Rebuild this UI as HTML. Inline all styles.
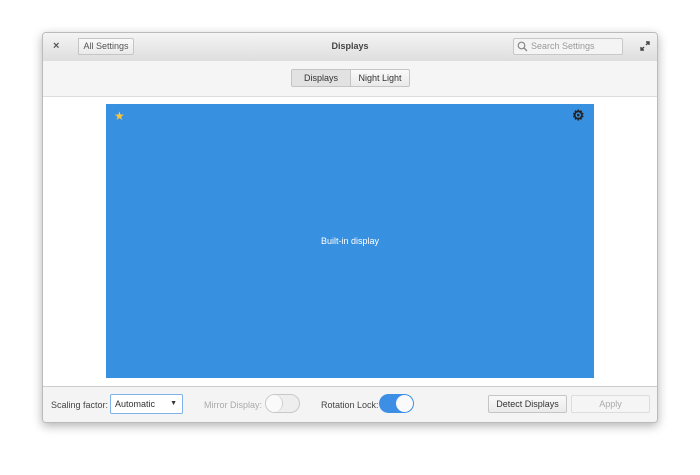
<!DOCTYPE html><html><head><style>
body{margin:0;width:700px;height:475px;background:#fff;font-family:"Liberation Sans",sans-serif;font-size:9px;color:#333;position:relative;overflow:hidden}
.win{position:absolute;left:42px;top:32px;width:616px;height:391px;border:1px solid #bbb;border-radius:4px;box-shadow:0 3px 10px rgba(0,0,0,.3);background:#fff;overflow:hidden;box-sizing:border-box}
.hdr{position:absolute;left:0;top:0;width:100%;height:28px;background:linear-gradient(#f4f4f4,#dedede);border-bottom:1px solid #bfbfbf}
.tb{position:absolute;left:0;top:28px;width:100%;height:35px;background:#f5f5f5;border-bottom:1px solid #ddd}
.bot{position:absolute;left:0;top:353px;width:100%;height:37px;background:#f4f4f4;border-top:1px solid #ccc}
.a{position:absolute}
.btn{position:absolute;border:1px solid #c5c5c5;border-radius:2px;background:linear-gradient(#fafafa,#eaeaea);text-align:center;box-sizing:border-box}
</style></head><body>
<div class="win">
<div class="hdr">
<div class="a" style="left:10px;top:7px;font-size:11px;font-weight:bold;color:#555">×</div>
<div class="btn" style="left:35px;top:5px;width:56px;height:17px;line-height:15px;color:#555;border-radius:0 2px 2px 0">All Settings</div>
<div class="a" style="left:0;width:100%;top:8px;text-align:center;font-weight:bold;color:#444">Displays</div>
<div class="a" style="left:470px;top:5px;width:110px;height:17px;border:1px solid #c8c8c8;border-radius:2px;background:#f4f4f4;box-sizing:border-box;color:#999;line-height:15px;padding-left:17px">Search Settings</div>
<svg class="a" style="left:474px;top:8px" width="11" height="11"><circle cx="4.5" cy="4.5" r="3.3" fill="none" stroke="#888" stroke-width="1.2"/><line x1="7" y1="7" x2="10" y2="10" stroke="#888" stroke-width="1.3"/></svg>
<svg class="a" style="left:597px;top:8px" width="10" height="10"><path d="M6 1H9V4M9 1L6 4M1 6V9H4M1 9L4 6" fill="none" stroke="#444" stroke-width="1.4"/></svg>
</div>
<div class="tb">
<div class="btn" style="left:248px;top:8px;width:60px;height:18px;line-height:16px;background:#e2e2e2;border-radius:2px 0 0 2px">Displays</div>
<div class="btn" style="left:307px;top:8px;width:60px;height:18px;line-height:16px;border-radius:0 2px 2px 0">Night Light</div>
</div>
<div class="a" style="left:63px;top:71px;width:488px;height:274px;background:#3790e0">
<div class="a" style="left:0;width:100%;top:132px;text-align:center;color:#fff">Built-in display</div>
<div class="a" style="left:8px;top:5px;color:#f9c440;font-size:12px">★</div>
<div class="a" style="left:466px;top:3px;color:#222;font-size:14px;font-weight:bold">⚙</div>
</div>
<div class="bot">
<div class="a" style="left:8px;top:13px;color:#444">Scaling factor:</div>
<div class="a" style="left:67px;top:7px;width:73px;height:20px;border:1px solid #7fb2e6;border-radius:2px;box-sizing:border-box;background:#fff;line-height:18px;padding-left:4px;color:#333">Automatic<span style="position:absolute;right:5px;font-size:7px">▼</span></div>
<div class="a" style="left:161px;top:13px;color:#aaa">Mirror Display:</div>
<div class="a" style="left:222px;top:7px;width:35px;height:19px;border:1px solid #c8c8c8;border-radius:10px;background:#eee;box-sizing:border-box"><div class="a" style="left:0;top:0;width:17px;height:17px;border-radius:50%;background:#fafafa;border-right:1px solid #ccc;box-sizing:border-box"></div></div>
<div class="a" style="left:278px;top:13px;color:#444">Rotation Lock:</div>
<div class="a" style="left:336px;top:7px;width:35px;height:19px;border-radius:10px;background:#3d8fe6"><div class="a" style="right:1px;top:1px;width:17px;height:17px;border-radius:50%;background:#fafafa"></div></div>
<div class="btn" style="left:445px;top:8px;width:79px;height:18px;line-height:16px">Detect Displays</div>
<div class="btn" style="left:528px;top:8px;width:79px;height:18px;line-height:16px;color:#aaa;background:#f5f5f5;border-color:#ddd">Apply</div>
</div>
</div>
</body></html>
